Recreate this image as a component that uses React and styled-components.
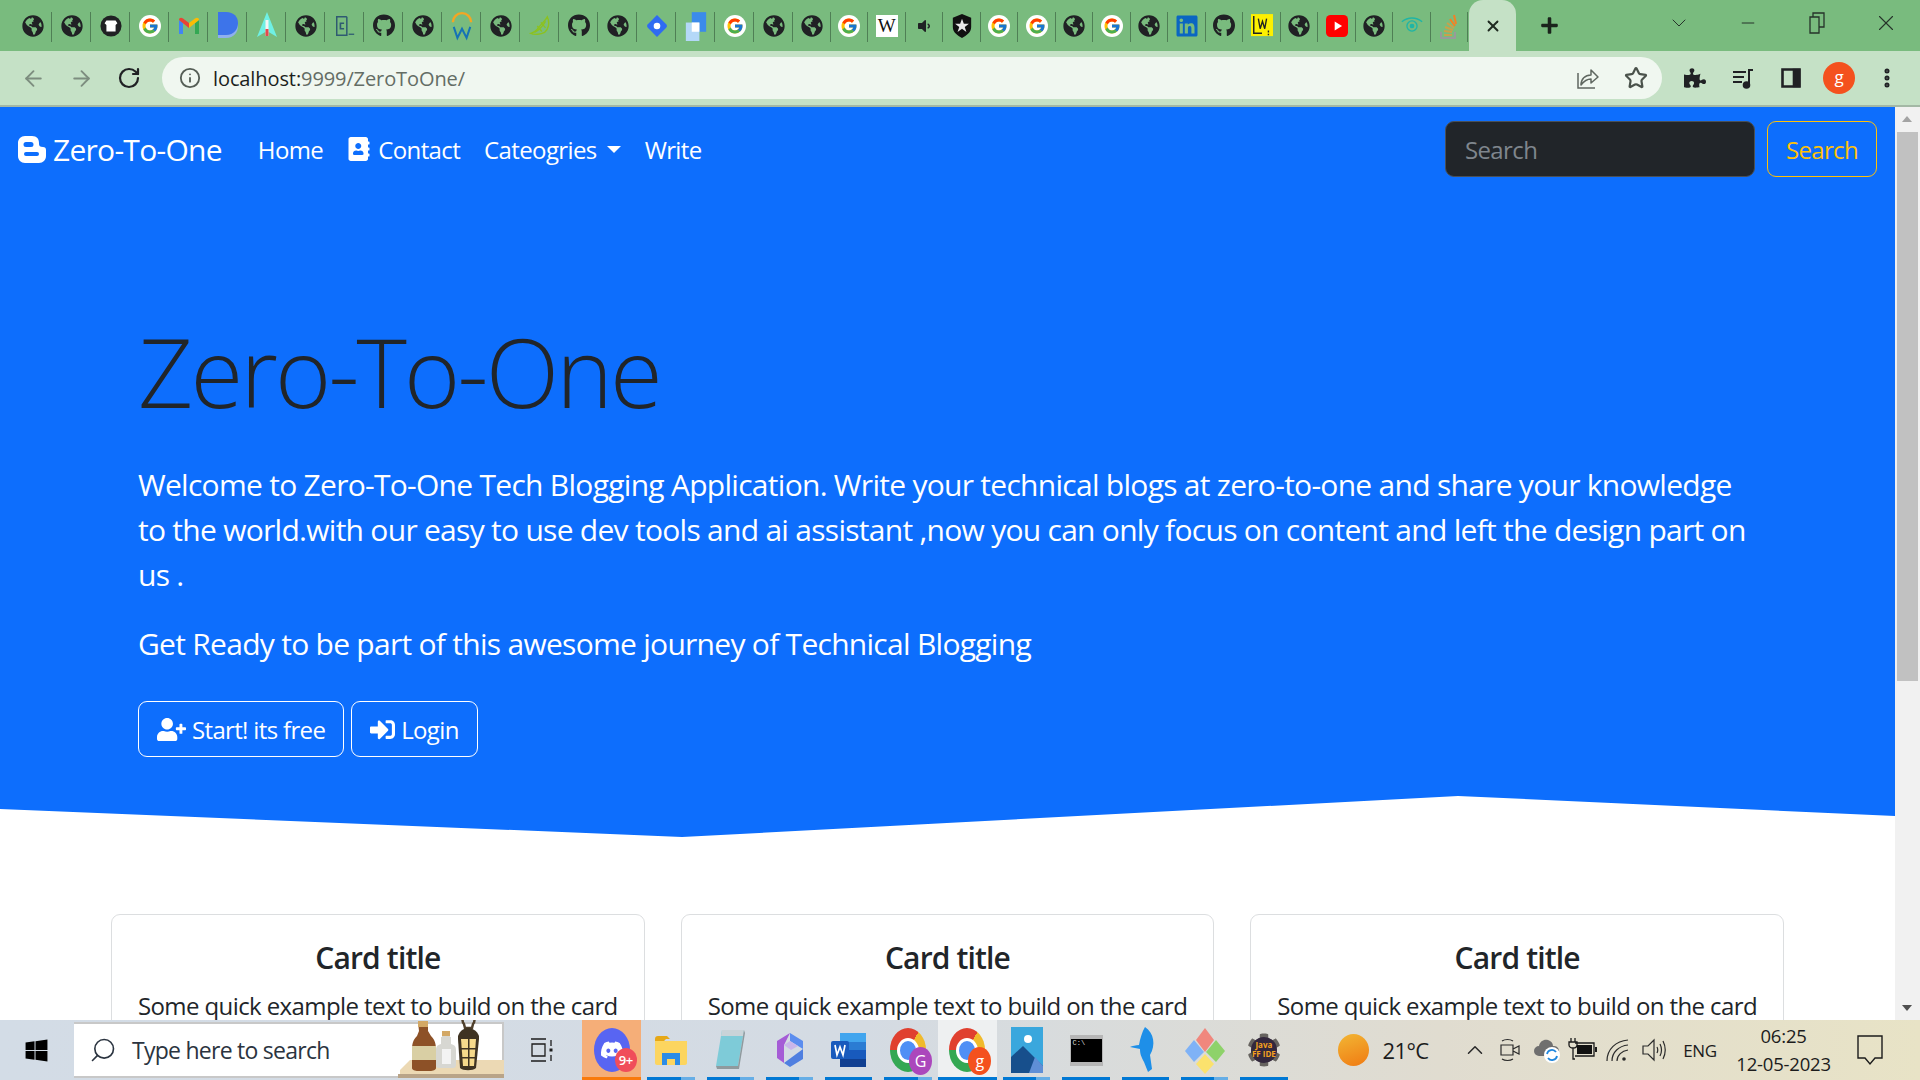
import React from "react";
import styled, { createGlobalStyle } from "styled-components";
import { FaAddressBook, FaUserPlus, FaSignInAlt, FaGithub, FaLinkedin, FaWindows, FaGlobeAmericas, FaPuzzlePiece, FaPlus, FaDiscord, FaCog, FaVolumeDown } from "react-icons/fa";
import { FcGoogle } from "react-icons/fc";
import { ArrowLeft, ArrowRight, RotateCw, Info, Star, EllipsisVertical, ChevronDown, Minus, X, Search, ChevronUp } from "lucide-react";

const GlobalStyle = createGlobalStyle`
  html, body { margin: 0; padding: 0; height: 100%; overflow: hidden; }
  body { font-family: "Open Sans", "Liberation Sans", sans-serif; color: #212529; }
  * { box-sizing: border-box; }
`;

const Screen = styled.div`
  width: 1920px;
  height: 1080px;
  display: flex;
  flex-direction: column;
  overflow: hidden;
`;

/* browser chrome */
const TabStrip = styled.div`
  height: 51px;
  flex: none;
  display: flex;
  padding-left: 13px;
  background: #79bb7e;
`;

const Tab = styled.div`
  width: ${(p) => (p.$narrow ? "37.5px" : "39px")};
  height: 51px;
  flex: none;
  display: flex;
  align-items: center;
  justify-content: center;
  position: relative;
  &::after {
    content: "";
    position: absolute;
    right: 0;
    top: 12px;
    height: 30px;
    width: 1px;
    background: #4f7f55;
  }
`;

const ActiveTab = styled.div`
  width: 47px;
  height: 51px;
  flex: none;
  margin-left: 1px;
  display: flex;
  align-items: center;
  justify-content: center;
  background: #c5e1c6;
  border-radius: 14px 14px 0 0;
  color: #1f2a20;
`;

const NewTab = styled.div`
  width: 66px;
  flex: none;
  display: flex;
  align-items: center;
  justify-content: center;
  color: #1b241c;
`;

const WindowControls = styled.div`
  margin-left: auto;
  display: flex;
`;

const WindowButton = styled.div`
  width: 69px;
  height: 51px;
  display: flex;
  align-items: center;
  justify-content: center;
  padding-bottom: 6px;
  color: #26332a;
`;

const Favicon = styled.span`
  width: 22px;
  height: 22px;
  display: flex;
  align-items: center;
  justify-content: center;
  color: ${(p) => p.$color || "#202124"};
  background: ${(p) => p.$bg || "transparent"};
  border-radius: ${(p) => p.$radius || "0"};
  font-size: ${(p) => p.$size || 22}px;
`;

const WikiLetter = styled.span`
  font-family: "Liberation Serif", serif;
  font-size: 19px;
  color: #111;
  line-height: 1;
`;

const Toolbar = styled.div`
  height: 54px;
  flex: none;
  display: flex;
  align-items: center;
  padding: 0 9px;
  background: #c5e1c6;
`;

const ToolButton = styled.div`
  width: 48px;
  height: 42px;
  flex: none;
  display: flex;
  align-items: center;
  justify-content: center;
  color: ${(p) => p.$color || "#202124"};
`;

const Omnibox = styled.div`
  flex: 1;
  height: 42px;
  margin: 0 9px;
  display: flex;
  align-items: center;
  padding: 0 2px 0 17px;
  border-radius: 21px;
  background: #f0f7f0;
  color: #555e56;
`;

const Url = styled.div`
  flex: 1;
  margin-left: 12px;
  font-size: 20px;
  letter-spacing: -0.1px;
  color: #646d65;
  span { color: #1c1f1c; }
`;

const ChromeLine = styled.div`
  height: 2px;
  flex: none;
  background: #a3b8a5;
`;

/* page */
const Viewport = styled.div`
  flex: 1;
  min-height: 0;
  display: flex;
  overflow: hidden;
`;

const Page = styled.div`
  flex: 1;
  min-width: 0;
  background: #fff;
`;

const Scrollbar = styled.div`
  width: 25px;
  flex: none;
  display: flex;
  flex-direction: column;
  align-items: center;
  background: #f1f1f1;
  position: relative;
`;

const ScrollThumb = styled.div`
  width: 21px;
  height: 549px;
  margin-top: 25px;
  background: #c1c1c1;
`;

const ScrollArrow = styled.div`
  position: absolute;
  left: 7px;
  ${(p) => (p.$down ? "bottom: 9px; border-top: 6px solid #505050;" : "top: 9px; border-bottom: 6px solid #a3a3a3;")}
  border-left: 5.5px solid transparent;
  border-right: 5.5px solid transparent;
`;

const Hero = styled.header`
  height: 730px;
  background: #0d6efd;
  clip-path: polygon(0 0, 100% 0, 100% 709px, 1458px 689px, 682px 730px, 0 702px);
`;

const Navbar = styled.nav`
  display: flex;
  align-items: center;
  height: 84px;
  padding: 14px 18px 14px;
`;

const Brand = styled.a`
  display: flex;
  align-items: center;
  gap: 7px;
  margin-right: 24px;
  font-size: 30px;
  letter-spacing: -0.72px;
  color: #fff;
`;

const NavLink = styled.a`
  display: flex;
  align-items: center;
  gap: 7px;
  padding: 0 12px;
  font-size: 24px;
  letter-spacing: -0.62px;
  color: #fff;
`;

const Caret = styled.span`
  margin-left: 3px;
  border-top: 7px solid #fff;
  border-left: 7px solid transparent;
  border-right: 7px solid transparent;
`;

const SearchForm = styled.form`
  margin-left: auto;
  display: flex;
  gap: 12px;
`;

const SearchInput = styled.div`
  width: 310px;
  height: 56px;
  display: flex;
  align-items: center;
  padding: 0 19px;
  border: 1.5px solid #495057;
  border-radius: 9px;
  background: #212529;
  font-size: 24px;
  letter-spacing: -0.62px;
  color: #7f868d;
`;

const OutlineButton = styled.button`
  height: 56px;
  display: inline-flex;
  align-items: center;
  gap: 6px;
  padding: 0 18px;
  border: 1.5px solid ${(p) => p.$color || "#fff"};
  border-radius: 9px;
  background: transparent;
  font-family: inherit;
  font-size: 24px;
  letter-spacing: -0.66px;
  color: ${(p) => p.$color || "#fff"};
`;

const HeroBody = styled.div`
  padding: 122px 138px 0;
`;

const Display = styled.h1`
  margin: 0 0 34px;
  font-size: 96px;
  font-weight: 300;
  line-height: 1.2;
  letter-spacing: -2.8px;
  color: #212529;
`;

const Lead = styled.p`
  margin: 0 0 24px;
  font-size: 30px;
  line-height: 45px;
  letter-spacing: -0.72px;
  color: #fff;
`;

const ButtonRow = styled.div`
  display: flex;
  gap: 7px;
  margin-top: 35px;
`;

const Cards = styled.section`
  display: grid;
  grid-template-columns: repeat(3, 1fr);
  gap: 36px;
  padding: 77px 111px 0;
`;

const Card = styled.article`
  padding: 25px 24px 24px;
  border: 1.5px solid #dcdee0;
  border-radius: 9px;
  text-align: center;
`;

const CardTitle = styled.h5`
  margin: 0 0 12px;
  font-size: 30px;
  font-weight: 600;
  line-height: 36px;
  letter-spacing: -0.85px;
`;

const CardText = styled.p`
  margin: 0;
  font-size: 24px;
  line-height: 36px;
  letter-spacing: -0.6px;
`;

/* windows taskbar */
const Taskbar = styled.footer`
  height: 60px;
  flex: none;
  display: flex;
  align-items: stretch;
  background: linear-gradient(90deg, #d3dce6 0%, #d4dbe3 45%, #e0dcd0 75%, #e8e3c6 100%);
`;

const StartButton = styled.div`
  width: 74px;
  display: flex;
  align-items: center;
  justify-content: center;
  padding-right: 2px;
  color: #000;
  font-size: 25px;
`;

const SearchBox = styled.div`
  width: 430px;
  margin: 2px 0;
  position: relative;
  display: flex;
  align-items: center;
  gap: 15px;
  padding-left: 15px;
  background: #fff;
  border: 2px solid #c8c8c8;
  border-width: 2px 2px 2px 0;
  font-size: 23px;
  letter-spacing: -0.74px;
  color: #2b3440;
`;

const MirroredSearch = styled(Search)`
  transform: scaleX(-1);
`;

const Scenery = styled.svg`
  position: absolute;
  right: -2px;
  bottom: -2px;
`;

const TaskView = styled.div`
  width: 78px;
  display: flex;
  align-items: center;
  justify-content: center;
`;

const TaskIcon = styled.div`
  width: 59.3px;
  flex: none;
  position: relative;
  display: flex;
  align-items: center;
  justify-content: center;
  background: ${(p) => p.$bg || "transparent"};
  &::after {
    content: "";
    position: absolute;
    bottom: 0;
    left: ${(p) => (p.$tile ? "0" : "6px")};
    right: ${(p) => (p.$tile ? "0" : "6px")};
    height: 3px;
    background: ${(p) => p.$bar || "linear-gradient(90deg, #0078d4 70%, #66aee6 70%)"};
  }
`;

const DiscordDisc = styled.div`
  width: 36px;
  height: 44px;
  border-radius: 50%;
  background: #5865f2;
  color: #fff;
  display: flex;
  align-items: center;
  justify-content: center;
  position: relative;
  font-size: 24px;
`;

const Badge = styled.span`
  position: absolute;
  right: -7px;
  bottom: 0;
  width: 22px;
  height: 24px;
  border-radius: 50%;
  background: #f04d5a;
  color: #fff;
  font-size: 13px;
  font-weight: 600;
  letter-spacing: -0.6px;
  display: flex;
  align-items: center;
  justify-content: center;
`;

const ChromeDisc = styled.div`
  width: 36px;
  height: 44px;
  border-radius: 50%;
  background: conic-gradient(from 30deg, #f0ba2c 0 120deg, #34a853 120deg 240deg, #e0402f 240deg 360deg);
  position: relative;
  display: flex;
  align-items: center;
  justify-content: center;
  &::before {
    content: "";
    width: 16px;
    height: 19px;
    border-radius: 50%;
    background: #4f8ff5;
    border: 3px solid #fff;
  }
`;

const ChromeProfile = styled.span`
  position: absolute;
  right: -6px;
  bottom: -3px;
  width: 23px;
  height: 28px;
  border-radius: 50%;
  background: ${(p) => p.$bg};
  color: #fff;
  font-size: 16px;
  display: flex;
  align-items: center;
  justify-content: center;
`;

const ConsoleBox = styled.div`
  width: 33px;
  height: 31px;
  background: #000;
  border: 1.5px solid #b6b6b6;
  border-top: 4px solid #b6b6b6;
  border-bottom-width: 4px;
  color: #ddd;
  font-family: "Liberation Mono", monospace;
  font-size: 7px;
  padding-left: 2px;
  line-height: 9px;
`;

const JavaBadge = styled.div`
  width: 36px;
  height: 42px;
  position: relative;
  display: flex;
  align-items: center;
  justify-content: center;
  font-size: 34px;
  color: #66635f;
`;

const JavaText = styled.span`
  position: absolute;
  inset: 8px 5px;
  border-radius: 50%;
  background: #33283d;
  color: #f4a11f;
  font-size: 8px;
  font-weight: 700;
  line-height: 9px;
  text-align: center;
  padding-top: 3px;
`;

const Tray = styled.div`
  flex: 1;
  display: flex;
  align-items: center;
  color: #1c1c1c;
`;

const Sun = styled.div`
  width: 31px;
  height: 32px;
  margin-left: 44px;
  border-radius: 50%;
  background: linear-gradient(160deg, #f2b634, #f07a12);
`;

const Temperature = styled.div`
  margin-left: 14px;
  width: 74px;
  font-size: 22px;
  letter-spacing: -0.6px;
`;

const TrayIcon = styled.div`
  width: 36px;
  display: flex;
  justify-content: center;
  color: #2a2a2a;
`;

const Lang = styled.div`
  width: 51px;
  margin-left: 2px;
  text-align: center;
  font-size: 17px;
  letter-spacing: -0.3px;
`;

const Clock = styled.div`
  width: 108px;
  margin-left: 4px;
  text-align: center;
  font-size: 18.5px;
  line-height: 28px;
  letter-spacing: -0.2px;
`;

const Notify = styled.div`
  width: 54px;
  margin-left: 5px;
  display: flex;
  justify-content: center;
`;

const BrandMark = () => (
  <svg width="28" height="27" viewBox="0 0 28 27">
    <path
      fillRule="evenodd"
      fill="#fff"
      d="M7 0h7c5 0 7 3 7 7v1c0 2 1 3 4 3 2 0 3 1 3 3v6c0 4-3 7-7 7H7c-4 0-7-3-7-7V7c0-4 3-7 7-7zM8 6a2 2 0 0 0 0 5h5a2 2 0 0 0 0-5zM8 16a2 2 0 0 0 0 4h11a2 2 0 0 0 0-4z"
    />
  </svg>
);

const Gmail = () => (
  <svg width="22" height="18" viewBox="0 0 22 18">
    <path d="M1 17V3l4 3v11z" fill="#4285f4" />
    <path d="M17 17V6l4-3v14z" fill="#34a853" />
    <path d="M1 3c0-2 2-3 4-1.5L11 6v5L1 3z" fill="#ea4335" />
    <path d="M21 3c0-2-2-3-4-1.5L11 6v5l10-8z" fill="#fbbc04" />
  </svg>
);

const DocD = () => (
  <svg width="22" height="30" viewBox="0 0 22 30">
    <path d="M1 4h8c8 0 12 5 12 11s-4 12-12 12H1z" fill="#8fb0ee" />
    <path d="M1 1h8c8 0 12 5 12 11s-4 12-12 12H1z" fill="#3d74ea" />
  </svg>
);

const Rocket = () => (
  <svg width="22" height="30" viewBox="0 0 22 30">
    <path d="M11 1L21 26 11 20 1 26z" fill="#6ff0e4" />
    <path d="M9.5 9h3v16h-3z" fill="#f4f4f4" />
    <path d="M9.5 18h3v7h-3z" fill="#e5484d" />
  </svg>
);

const Tee = () => (
  <svg width="24" height="24" viewBox="0 0 24 24">
    <circle cx="12" cy="12" r="11.5" fill="#202124" />
    <path d="M7 6h10l2 3-2 2v7H7v-7L5 9z" fill="#fff" />
  </svg>
);

const BoxC = () => (
  <svg width="24" height="24" viewBox="0 0 24 24" fill="none" stroke="#2f5a72" strokeWidth="1.6">
    <path d="M14 2H3v20h11V2" />
    <path d="M16 21h6" strokeWidth="1.4" />
    <path d="M11 9H7v6h4" strokeWidth="1.8" />
  </svg>
);

const Workday = () => (
  <svg width="24" height="30" viewBox="0 0 24 30" fill="none">
    <path d="M2 11a10 10 0 0 1 20 0" stroke="#f5a623" strokeWidth="2.6" />
    <path d="M3 16l4 12 5-10 5 10 4-12" stroke="#1572b6" strokeWidth="2.2" />
  </svg>
);

const Lime = () => (
  <svg width="24" height="24" viewBox="0 0 24 24" fill="none" stroke="#8cc21f" strokeWidth="1.5">
    <path d="M2 20c4-1 7-4 9-7 3-4 7-7 9-11 3 7 1 14-3 17-4 2-11 3-15 1z" />
    <path d="M6 19c4-2 9-7 12-12M9 12l5 6M13 8l5 6" />
  </svg>
);

const Diamond = () => (
  <svg width="24" height="26" viewBox="0 0 24 24">
    <path d="M12 0l10 10q2 2 0 4L12 24 2 14q-2-2 0-4z" fill="#2f6bf2" />
    <circle cx="12" cy="12" r="3.6" fill="#fff" />
  </svg>
);

const Squares = () => (
  <svg width="26" height="30" viewBox="0 0 26 26" preserveAspectRatio="none">
    <path d="M8 1h17v17H8z" fill="#3b8bea" />
    <path d="M1 10h16v16H1z" fill="#b4d8f8" />
    <path d="M8 10h9v8H8z" fill="#fff" />
  </svg>
);

const StarShield = () => (
  <svg width="24" height="26" viewBox="0 0 24 26">
    <path d="M12 0l10 4v10c0 6-5 9-10 12C7 23 2 20 2 14V4z" fill="#111" />
    <path d="M12 5l2 5.500h5.500l-4.500 3.500 1.800 5.500-4.800-3.400-4.800 3.400L9 14 4.500 10.500H10z" fill="#e9e9e9" />
  </svg>
);

const LetterW = () => (
  <svg width="24" height="26" viewBox="0 0 24 26">
    <path d="M0 0h24v24H0z" fill="#fdf000" />
    <path d="M3 2v19h9" fill="none" stroke="#222" strokeWidth="1.6" />
    <path d="M8 5l2 11 2.500-8 2.500 8 2-11" fill="none" stroke="#222" strokeWidth="1.5" />
    <path d="M19 18v2M19 21.500v1.500" stroke="#222" strokeWidth="1.5" />
  </svg>
);

const Youtube = () => (
  <svg width="24" height="24" viewBox="0 0 24 24">
    <rect width="24" height="24" rx="5" fill="#f00" />
    <path d="M9.500 7l8 5-8 5z" fill="#fff" />
  </svg>
);

const Eye = () => (
  <svg width="26" height="26" viewBox="0 0 26 26" fill="none" stroke="#1fb5a6" strokeWidth="1.6">
    <path d="M1 8c7-6 17-6 24 0" />
    <circle cx="13" cy="13" r="6" />
    <circle cx="13" cy="13" r="2" fill="#1fb5a6" />
  </svg>
);

const Stack = () => (
  <svg width="22" height="28" viewBox="0 0 22 28" fill="none" strokeWidth="2">
    <path d="M3 20v6h14v-6" stroke="#9a9a9a" />
    <path d="M6 23h8M6 19l8 1M7 15l8 3M9 11l7 5" stroke="#c9a24a" />
    <path d="M12 7l5 7M16 3l2 9" stroke="#f48024" />
  </svg>
);

const tabIcons = [
  "globe", "globe", "tee", "google", "gmail", "doc", "rocket", "globe", "boxc", "github",
  "globe", "workday", "globe", "lime", "github", "globe", "diamond", "squares", "google", "globe",
  "globe", "google", "wiki", "speaker", "shield", "google", "google", "globe", "google", "globe",
  "linkedin", "github", "lw", "globe", "youtube", "globe", "eye", "stack",
];

const renderFavicon = (kind) => {
  switch (kind) {
    case "globe": return <Favicon><FaGlobeAmericas /></Favicon>;
    case "github": return <Favicon $size={25}><FaGithub /></Favicon>;
    case "google": return <Favicon $bg="#fff" $radius="50%"><FcGoogle size={18} /></Favicon>;
    case "linkedin": return <Favicon $color="#0a66c2"><FaLinkedin size={24} /></Favicon>;
    case "wiki": return <Favicon $bg="#fff"><WikiLetter>W</WikiLetter></Favicon>;
    case "speaker": return <Favicon><FaVolumeDown size={16} /></Favicon>;
    case "gmail": return <Favicon><Gmail /></Favicon>;
    case "doc": return <Favicon><DocD /></Favicon>;
    case "rocket": return <Favicon><Rocket /></Favicon>;
    case "tee": return <Favicon><Tee /></Favicon>;
    case "boxc": return <Favicon><BoxC /></Favicon>;
    case "workday": return <Favicon><Workday /></Favicon>;
    case "lime": return <Favicon><Lime /></Favicon>;
    case "diamond": return <Favicon><Diamond /></Favicon>;
    case "squares": return <Favicon><Squares /></Favicon>;
    case "shield": return <Favicon><StarShield /></Favicon>;
    case "lw": return <Favicon><LetterW /></Favicon>;
    case "youtube": return <Favicon><Youtube /></Favicon>;
    case "eye": return <Favicon><Eye /></Favicon>;
    default: return <Favicon><Stack /></Favicon>;
  }
};

const cards = [1, 2, 3];

const ShareIcon = () => (
  <svg width="24" height="24" viewBox="0 0 24 24" fill="none" stroke="#5f6760" strokeWidth="1.5">
    <path d="M2 7v15h17" />
    <path d="M5 19c0-6 4-10 10-10V4l7 7-7 6v-4c-4 0-7 2-10 6z" strokeLinejoin="round" />
  </svg>
);

const SidePanelIcon = () => (
  <svg width="20" height="20" viewBox="0 0 20 20" fill="none" stroke="#202124" strokeWidth="2.600">
    <path d="M1.500 1.500h17v17h-17z" />
    <path d="M13 2h5v16h-5z" fill="#202124" />
  </svg>
);

const MediaIcon = () => (
  <svg width="24" height="24" viewBox="0 0 24 24" fill="none" stroke="#202124" strokeWidth="2">
    <path d="M2 6h13M2 11h11M2 16h9M22 4h-4v15" />
    <circle cx="15.500" cy="19" r="2.800" fill="#202124" />
  </svg>
);

const ProfileIcon = () => (
  <svg width="32" height="32" viewBox="0 0 32 32">
    <circle cx="16" cy="16" r="16" fill="#f4511e" />
    <text x="16" y="21" textAnchor="middle" fontSize="17" fill="#fff" fontFamily="Open Sans, sans-serif">g</text>
  </svg>
);

const Bottles = () => (
  <Scenery width="106" height="58" viewBox="0 0 106 58">
    <path d="M2 58V50L12 40H106V58z" fill="#ecd9b4" />
    <path d="M0 54H106V58H0z" fill="#b9a488" />
    <path d="M20 2h10v9l3 5c4 4 5 8 5 14v18c0 2-3 3-6 3H20c-3 0-6-1-6-3V30c0-6 1-10 5-14l2-5z" fill="#8d5127" />
    <path d="M14 26h24v14H14z" fill="#d9cfa4" />
    <path d="M20 1h10v6H20z" fill="#d3a865" />
    <path d="M44 11h8v6h-8zM43 17h10v7c4 1 5 3 5 6v15c0 2-1 3-3 3H41c-2 0-3-1-3-3V30c0-3 1-5 5-6z" fill="#d7d7d2" />
    <path d="M44 11h8v5h-8z" fill="#d3a865" />
    <path d="M44 29h9v15h-9z" fill="#f3f3f3" />
    <path d="M66 4a6 6 0 1 1 9 0l-1 4h-7z" fill="none" stroke="#50402c" strokeWidth="2.500" />
    <path d="M60 16c2-6 7-8 10-8s9 2 11 8v3l-3 29c-3 3-13 3-16 0l-2-29z" fill="#3f3322" />
    <path d="M63 19h15l-2 27H65z" fill="#f6d98b" />
    <path d="M70 19h1.500v27H70zM63 28h15v1.500H63zM64 37h13v1.500H64z" fill="#3f3322" />
  </Scenery>
);

const TaskViewIcon = () => (
  <svg width="26" height="26" viewBox="0 0 26 26" fill="none" stroke="#1c1c1c" strokeWidth="1.300">
    <path d="M1 2h15M1 24h15M2 7h13v12H2zM21 3v6M21 18v6" />
    <path d="M19.500 11.500h3v3h-3z" fill="#1c1c1c" stroke="none" />
  </svg>
);

const FolderIcon = () => (
  <svg width="34" height="32" viewBox="0 0 34 32">
    <path d="M1 5c0-2 1-3 3-3h9l3 3h-4l-3 3H1z" fill="#e6a817" />
    <path d="M1 7h32v22c0 1-1 2-2 2H3c-1 0-2-1-2-2z" fill="#fcd55f" />
    <path d="M8 31V19h18v12h-5v-6h-8v6z" fill="#2b8ce6" />
  </svg>
);

const NotepadIcon = () => (
  <svg width="34" height="44" viewBox="0 0 34 44">
    <path d="M9 2h22l-6 36H3z" fill="#7ecbd8" />
    <path d="M9 2h22l-1 6H8z" fill="#c9d3d8" />
    <path d="M3 38h22l6-36 1 3-6 36H4z" fill="#8f9a9e" />
  </svg>
);

const CopilotIcon = () => (
  <svg width="30" height="36" viewBox="0 0 30 36">
    <path d="M15 1l13 8v8L15 9z" fill="#5b8def" />
    <path d="M15 1L2 9v17l7 5V13z" fill="#a55cd6" />
    <path d="M28 17v10l-13 8-6-4 19-14z" fill="#4f7fe0" />
    <path d="M9 13l6-4 8 5-7 4z" fill="#c9b6ea" />
  </svg>
);

const WordIcon = () => (
  <svg width="36" height="36" viewBox="0 0 36 36">
    <path d="M9 1h24c1 0 2 1 2 2v30c0 1-1 2-2 2H11c-1 0-2-1-2-2z" fill="#2b7cd3" />
    <path d="M9 1h26v9H9z" fill="#41a5ee" />
    <path d="M9 18h26v9H9z" fill="#185abd" />
    <path d="M9 27h26v8H9z" fill="#103f91" />
    <rect y="9" width="18" height="18" rx="2" fill="#185abd" />
    <path d="M4 13l2 10 3-8 3 8 2-10" fill="none" stroke="#fff" strokeWidth="1.700" />
  </svg>
);

const PhotosIcon = () => (
  <svg width="32" height="46" viewBox="0 0 32 46">
    <path d="M0 0h32v46H0z" fill="#3aa7dd" />
    <circle cx="17" cy="12" r="4" fill="#fff" />
    <path d="M0 46V30l12-11 20 20v7z" fill="#174f8c" />
    <path d="M18 46l6-16 8 9v7z" fill="#5f8fd6" />
  </svg>
);

const DolphinIcon = () => (
  <svg width="30" height="46" viewBox="0 0 30 46">
    <path d="M15 0c9 6 11 18 5 28l2 14-4 3-4-10c-3-6-4-8-4-13L0 20c2-1 6-2 9-2C10 12 12 5 15 0z" fill="#1e8fe8" />
  </svg>
);

const DiamondsIcon = () => (
  <svg width="40" height="48" viewBox="0 0 40 48">
    <path d="M20 2l9 12-9 12-9-12z" fill="#f0877d" />
    <path d="M9 14l10 12L9 36 0 25z" fill="#7fb2f6" />
    <path d="M31 14l9 11-9 11-10-10z" fill="#8ed26a" />
    <path d="M20 28l9 10-9 10-9-10z" fill="#fbe26d" />
  </svg>
);

const MeetIcon = () => (
  <svg width="26" height="26" viewBox="0 0 26 26" fill="none" stroke="#2a2a2a" strokeWidth="1.200">
    <path d="M3 8h12v10H3zM15 12l6-3v8l-6-3" />
    <path d="M4 4c3-2 8-2 11 0M4 22c3 2 8 2 11 0" />
  </svg>
);

const CloudSync = () => (
  <svg width="28" height="28" viewBox="0 0 28 28">
    <path d="M6 20a5 5 0 0 1 0-10c1-5 5-7 9-6 3 1 5 3 5 6a5 5 0 0 1 2 10z" fill="#6f6f6f" />
    <circle cx="19" cy="19" r="8" fill="#fff" />
    <path d="M14 18a5 5 0 0 1 9-2M24 20a5 5 0 0 1-9 2" fill="none" stroke="#1f86dd" strokeWidth="1.800" />
  </svg>
);

const BatteryPlug = () => (
  <svg width="32" height="26" viewBox="0 0 32 26" fill="none" stroke="#1a1a1a" strokeWidth="1.300">
    <path d="M4 1v4M8 1v4M2 5h8v3c0 2-2 3-4 3s-4-1-4-3zM6 11v11h2" />
    <path d="M8 6h19v13H8" />
    <path d="M10 8h15v9H10z" fill="#111" stroke="none" />
    <path d="M29 10v5" strokeWidth="2" />
  </svg>
);

const WifiArcs = () => (
  <svg width="26" height="26" viewBox="0 0 26 26" fill="none" stroke="#2a2a2a" strokeWidth="1.200">
    <path d="M1 24C1 12 10 4 22 3M6 24c0-9 7-15 16-16M11 24c0-6 5-10 11-11" />
    <circle cx="18" cy="22" r="1.800" fill="#2a2a2a" stroke="none" />
  </svg>
);

const SpeakerIcon = () => (
  <svg width="26" height="26" viewBox="0 0 26 26" fill="none" stroke="#2a2a2a" strokeWidth="1.200">
    <path d="M1 9h5l6-6v20l-6-6H1z" />
    <path d="M15 10c1 2 1 4 0 6M18 7c2 4 2 8 0 12M21 4c3 6 3 12 0 18" />
  </svg>
);

const NotifyIcon = () => (
  <svg width="26" height="32" viewBox="0 0 26 32" fill="none" stroke="#1c1c1c" strokeWidth="1.400">
    <path d="M1 2h24v22h-7l-5 6-5-6H1z" />
  </svg>
);

export default function App() {
  return (
    <Screen>
      <GlobalStyle />
      <TabStrip>
        {tabIcons.map((kind, i) => (
          <Tab key={i} $narrow={i >= 20}>{renderFavicon(kind)}</Tab>
        ))}
        <ActiveTab><X size={18} strokeWidth={2.5} /></ActiveTab>
        <NewTab><FaPlus size={19} /></NewTab>
        <WindowControls>
          <WindowButton><ChevronDown size={24} strokeWidth={1} /></WindowButton>
          <WindowButton><Minus size={20} strokeWidth={1.2} /></WindowButton>
          <WindowButton>
            <svg width="16" height="22" viewBox="0 0 16 22" fill="none" stroke="#26332a" strokeWidth="1.300">
              <path d="M1 5h9v16H1zM4 5V1h11v14h-5" />
            </svg>
          </WindowButton>
          <WindowButton><X size={26} strokeWidth={1} /></WindowButton>
        </WindowControls>
      </TabStrip>
      <Toolbar>
        <ToolButton $color="#7d8d7f"><ArrowLeft size={25} strokeWidth={1.8} /></ToolButton>
        <ToolButton $color="#7d8d7f"><ArrowRight size={25} strokeWidth={1.8} /></ToolButton>
        <ToolButton><RotateCw size={24} strokeWidth={2.2} /></ToolButton>
        <Omnibox>
          <Info size={22} strokeWidth={2} />
          <Url><span>localhost:</span>9999/ZeroToOne/</Url>
          <ToolButton><ShareIcon /></ToolButton>
          <ToolButton $color="#4a524b"><Star size={24} strokeWidth={2.2} /></ToolButton>
        </Omnibox>
        <ToolButton><FaPuzzlePiece size={22} /></ToolButton>
        <ToolButton><MediaIcon /></ToolButton>
        <ToolButton><SidePanelIcon /></ToolButton>
        <ToolButton><ProfileIcon /></ToolButton>
        <ToolButton><EllipsisVertical size={24} strokeWidth={3} /></ToolButton>
      </Toolbar>
      <ChromeLine />
      <Viewport>
        <Page>
          <Hero>
            <Navbar>
              <Brand><BrandMark />Zero-To-One</Brand>
              <NavLink>Home</NavLink>
              <NavLink><FaAddressBook />Contact</NavLink>
              <NavLink>Cateogries<Caret /></NavLink>
              <NavLink>Write</NavLink>
              <SearchForm>
                <SearchInput>Search</SearchInput>
                <OutlineButton type="button" $color="#ffc107">Search</OutlineButton>
              </SearchForm>
            </Navbar>
            <HeroBody>
              <Display>Zero-To-One</Display>
              <Lead>Welcome to Zero-To-One Tech Blogging Application. Write your technical blogs at zero-to-one and share your knowledge to the world.with our easy to use dev tools and ai assistant ,now you can only focus on content and left the design part on us .</Lead>
              <Lead>Get Ready to be part of this awesome journey of Technical Blogging</Lead>
              <ButtonRow>
                <OutlineButton type="button"><FaUserPlus size={29} />Start! its free</OutlineButton>
                <OutlineButton type="button"><FaSignInAlt size={25} />Login</OutlineButton>
              </ButtonRow>
            </HeroBody>
          </Hero>
          <Cards>
            {cards.map((c) => (
              <Card key={c}>
                <CardTitle>Card title</CardTitle>
                <CardText>Some quick example text to build on the card title and make up the bulk of the card's content.</CardText>
              </Card>
            ))}
          </Cards>
        </Page>
        <Scrollbar>
          <ScrollArrow />
          <ScrollThumb />
          <ScrollArrow $down />
        </Scrollbar>
      </Viewport>
      <Taskbar>
        <StartButton><FaWindows /></StartButton>
        <SearchBox>
          <MirroredSearch size={28} strokeWidth={1.4} />
          Type here to search
          <Bottles />
        </SearchBox>
        <TaskView><TaskViewIcon /></TaskView>
        <TaskIcon $tile $bg="#f5ae78" $bar="#f97a0c">
          <DiscordDisc><FaDiscord /><Badge>9+</Badge></DiscordDisc>
        </TaskIcon>
        <TaskIcon><FolderIcon /></TaskIcon>
        <TaskIcon><NotepadIcon /></TaskIcon>
        <TaskIcon><CopilotIcon /></TaskIcon>
        <TaskIcon $bar="#0078d4"><WordIcon /></TaskIcon>
        <TaskIcon><ChromeDisc><ChromeProfile $bg="#ab47bc">G</ChromeProfile></ChromeDisc></TaskIcon>
        <TaskIcon $tile $bg="#eef0f1" $bar="#0078d4"><ChromeDisc><ChromeProfile $bg="#f4511e">g</ChromeProfile></ChromeDisc></TaskIcon>
        <TaskIcon><PhotosIcon /></TaskIcon>
        <TaskIcon $bar="#0078d4"><ConsoleBox>C:\</ConsoleBox></TaskIcon>
        <TaskIcon $bar="#0078d4"><DolphinIcon /></TaskIcon>
        <TaskIcon><DiamondsIcon /></TaskIcon>
        <TaskIcon $bar="#0078d4"><JavaBadge><FaCog /><JavaText>Java FF IDE</JavaText></JavaBadge></TaskIcon>
        <Tray>
          <Sun />
          <Temperature>21°C</Temperature>
          <TrayIcon><ChevronUp size={26} strokeWidth={1.4} /></TrayIcon>
          <TrayIcon><MeetIcon /></TrayIcon>
          <TrayIcon><CloudSync /></TrayIcon>
          <TrayIcon><BatteryPlug /></TrayIcon>
          <TrayIcon><WifiArcs /></TrayIcon>
          <TrayIcon><SpeakerIcon /></TrayIcon>
          <Lang>ENG</Lang>
          <Clock>06:25<br />12-05-2023</Clock>
          <Notify><NotifyIcon /></Notify>
        </Tray>
      </Taskbar>
    </Screen>
  );
}
